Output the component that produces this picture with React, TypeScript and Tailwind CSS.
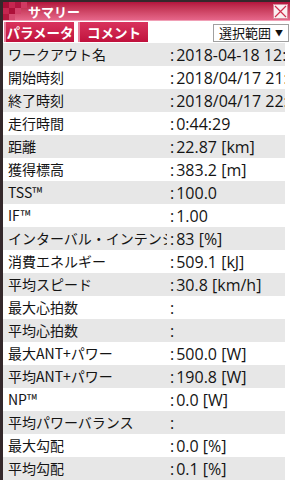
import React from 'react';

// summary rows: label / value
const rows: [string, string][] = [
  ['ワークアウト名', '2018-04-18 12:30'],
  ['開始時刻', '2018/04/17 21:40:12'],
  ['終了時刻', '2018/04/17 22:24:41'],
  ['走行時間', '0:44:29'],
  ['距離', '22.87 [km]'],
  ['獲得標高', '383.2 [m]'],
  ['TSS™', '100.0'],
  ['IF™', '1.00'],
  ['インターバル・インテンシティ', '83 [%]'],
  ['消費エネルギー', '509.1 [kJ]'],
  ['平均スピード', '30.8 [km/h]'],
  ['最大心拍数', ''],
  ['平均心拍数', ''],
  ['最大ANT+パワー', '500.0 [W]'],
  ['平均ANT+パワー', '190.8 [W]'],
  ['NP™', '0.0 [W]'],
  ['平均パワーバランス', ''],
  ['最大勾配', '0.0 [%]'],
  ['平均勾配', '0.1 [%]'],
];

const font = { fontFamily: '"Noto Sans CJK JP", "Noto Sans", sans-serif' };
const valueFont = { fontFamily: '"Open Sans", "Noto Sans CJK JP", sans-serif' };

const Checker = () => (
  <svg width="26" height="18" viewBox="0 0 26 18" className="absolute left-0 top-0">
    <rect x="0" y="0" width="6" height="6" fill="#a80d36" />
    <rect x="6" y="0" width="6" height="6" fill="#c52650" />
    <rect x="12" y="0" width="6" height="6" fill="#b01540" />
    <rect x="18" y="0" width="6" height="6" fill="#cf3a62" />
    <rect x="0" y="6" width="6" height="6" fill="#c52650" />
    <rect x="6" y="6" width="6" height="6" fill="#ad1039" />
    <rect x="12" y="6" width="6" height="6" fill="#d2426a" />
    <rect x="0" y="12" width="6" height="6" fill="#b4183f" />
    <rect x="6" y="12" width="6" height="6" fill="#d54a70" />
  </svg>
);

const CloseBox = () => (
  <svg width="15" height="15" viewBox="0 0 15 15">
    <rect x="0.5" y="0.5" width="14" height="14" fill="#fbeff2" stroke="#d88a9c" />
    <path d="M2 2 L13 13 M13 2 L2 13" stroke="#d0304f" strokeWidth="1.2" />
  </svg>
);

const App: React.FC = () => {
  return (
    <div
      className="w-[290px] h-[480px] overflow-hidden bg-white border-t-2 border-l-[3px] border-[#34282b] flex flex-col"
      style={font}
    >
      {/* title bar */}
      <div className="relative h-[18px] shrink-0 bg-gradient-to-b from-[#b3123d] to-[#e6668a] flex items-center">
        <Checker />
        <span className="relative ml-[25px] text-[13px] font-bold text-white leading-none">サマリー</span>
        <div className="ml-auto mr-[2px] mt-[1px] flex">
          <CloseBox />
        </div>
      </div>
      <div className="h-px shrink-0 bg-[#f0a0b6]" />

      {/* tabs */}
      <div className="h-[22px] shrink-0 flex items-start pt-[1px] pl-px pr-[1px]">
        <div className="h-[20px] w-[70px] flex items-center justify-center bg-gradient-to-b from-[#d9325d] to-[#c0103c] border-l-2 border-[#e8809c] text-white text-[13.5px] font-bold">
          パラメータ
        </div>
        <div className="ml-[4px] h-[20px] w-[70px] flex items-center justify-center bg-gradient-to-b from-[#d9325d] to-[#c0103c] border-l-2 border-[#e8809c] text-white text-[13.5px] font-bold">
          コメント
        </div>
        <div className="ml-auto mt-[2px] h-[18px] w-[76px] border border-[#a0a0a0] bg-white flex items-center justify-between pl-[5px] pr-[5px] text-[13px] text-[#111]">
          <span>選択範囲</span>
          <span className="text-[8px]">▼</span>
        </div>
      </div>

      {/* rows */}
      <div className="w-[282px] flex flex-col">
        {rows.map(([label, value], i) => (
          <div
            key={label}
            className={`h-[23px] flex items-center text-[14px] text-[#141414] ${i % 2 === 0 ? 'bg-[#e7e7e7]' : 'bg-white'}`}
          >
            <div className="w-[164px] shrink-0 pl-[5px] overflow-hidden whitespace-nowrap">{label}</div>
            <div className="flex-1 overflow-hidden whitespace-nowrap pl-[3px] text-[16px] leading-[22px]" style={valueFont}>
              <span className="mr-[2px]">:</span>
              {value}
            </div>
          </div>
        ))}
      </div>
    </div>
  );
};

export default App;
